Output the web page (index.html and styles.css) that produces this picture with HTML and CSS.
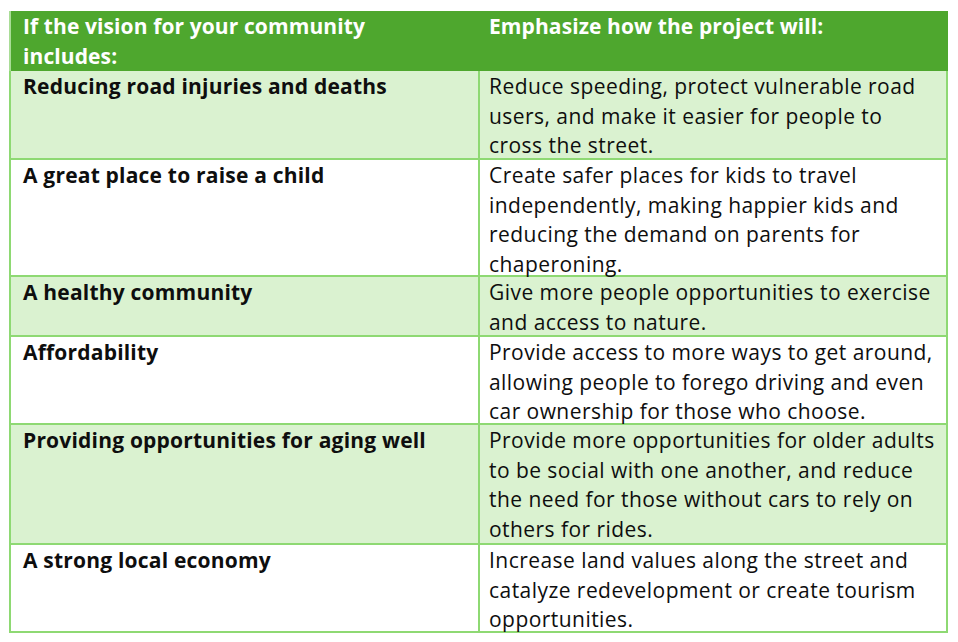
FILE: index.html
```html
<!DOCTYPE html>
<html lang="en">
<head>
<meta charset="utf-8">
<title>Vision table</title>
<link rel="stylesheet" href="styles.css">
</head>
<body>
<div class="table">
  <div class="cell head left">If the vision for your community<br>includes:</div>
  <div class="cell head right">Emphasize how the project will:</div>

  <div class="cell key tint">Reducing road injuries and deaths</div>
  <div class="cell val tint">Reduce speeding, protect vulnerable road<br>users, and make it easier for people to<br>cross the street.</div>

  <div class="cell key">A great place to raise a child</div>
  <div class="cell val">Create safer places for kids to travel<br>independently, making happier kids and<br>reducing the demand on parents for<br>chaperoning.</div>

  <div class="cell key tint">A healthy community</div>
  <div class="cell val tint">Give more people opportunities to exercise<br>and access to nature.</div>

  <div class="cell key">Affordability</div>
  <div class="cell val">Provide access to more ways to get around,<br>allowing people to forego driving and even<br>car ownership for those who choose.</div>

  <div class="cell key tint">Providing opportunities for aging well</div>
  <div class="cell val tint">Provide more opportunities for older adults<br>to be social with one another, and reduce<br>the need for those without cars to rely on<br>others for rides.</div>

  <div class="cell key">A strong local economy</div>
  <div class="cell val">Increase land values along the street and<br>catalyze redevelopment or create tourism<br>opportunities.</div>
</div>
</body>
</html>
```
FILE: styles.css
```css
html, body {
  margin: 0;
  padding: 0;
  background: #ffffff;
}
body {
  font-family: "Open Sans", "Liberation Sans", sans-serif;
  font-size: 21px;
  color: #0e0e0e;
}
.table {
  margin: 11px 0 0 9px;
  width: 939px;
  display: grid;
  grid-template-columns: 469px 470px;
  grid-template-rows: 60px 89px 117px 60px 88px 120px 88px;
}
.cell {
  line-height: 29.5px;
  white-space: nowrap;
  box-sizing: border-box;
  letter-spacing: 0.45px;
  padding-top: 1px;
}
.head {
  background: #4ea72e;
  color: #ffffff;
  font-weight: 700;
  letter-spacing: 0.1px;
  padding-left: 12px;
}
.head.left {
  border-left: 2px solid #a9dd96;
}
.head.right {
  padding-left: 11px;
}
.key {
  font-weight: 700;
  letter-spacing: 0.2px;
  border-left: 2px solid #8ed973;
  border-bottom: 2px solid #8ed973;
  padding-left: 12px;
}
.val {
  border-left: 2px solid #8ed973;
  border-right: 2px solid #8ed973;
  border-bottom: 2px solid #8ed973;
  padding-left: 9px;
}
.tint {
  background: #daf2d0;
}
```
